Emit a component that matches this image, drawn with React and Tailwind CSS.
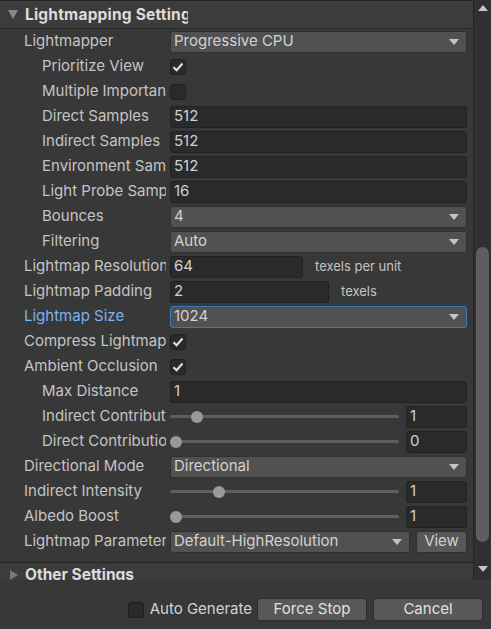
import React from 'react';

const Arrow = () => (
  <svg width="10" height="6" viewBox="0 0 10 6" className="shrink-0">
    <path d="M0 0 L10 0 L5 6 Z" fill="#c4c4c4" />
  </svg>
);

const Check = ({ on }) => (
  <div className="w-[16px] h-[16px] shrink-0 rounded-[3px] bg-[#2a2a2a] border border-[#1f1f1f] flex items-center justify-center">
    {on && (
      <svg width="12" height="10" viewBox="0 0 12 10">
        <path d="M1.5 5.2 L4.6 8.2 L10.5 1.5" stroke="#e4e4e4" strokeWidth="2" fill="none" />
      </svg>
    )}
  </div>
);

const Field = ({ value, className = 'flex-1' }) => (
  <div className={`${className} h-[22px] rounded-[3px] bg-[#2a2a2a] border border-[#212121] px-[3px] flex items-center text-[#d2d2d2]`}>
    {value}
  </div>
);

const Dropdown = ({ value, focus }) => (
  <div
    className={`flex-1 h-[22px] rounded-[3px] bg-[#515151] border ${focus ? 'border-[#3a79bb]' : 'border-[#303030]'} pl-[3px] pr-[7px] flex items-center justify-between text-[#d2d2d2]`}
  >
    <span>{value}</span>
    <Arrow />
  </div>
);

const Slider = ({ pos, value }) => (
  <div className="flex-1 flex items-center gap-[7px]">
    <div className="relative flex-1 h-[22px] flex items-center">
      <div className="w-full h-[3px] bg-[#5e5e5e] rounded-full" />
      <div
        className="absolute top-[5px] w-[12px] h-[12px] rounded-full bg-[#999999]"
        style={{ left: pos }}
      />
    </div>
    <Field value={value} className="w-[61px]" />
  </div>
);

const Row = ({ label, indent, blue, children }) => (
  <div className="h-[25px] shrink-0 flex items-center pr-[6px]">
    <div
      className={`w-[170px] shrink-0 pr-[4px] overflow-hidden whitespace-nowrap ${indent ? 'pl-[42px]' : 'pl-[24px]'}`}
    >
      <div className={`overflow-hidden ${blue ? 'text-[#7bb2f0]' : 'text-[#c4c4c4]'}`}>{label}</div>
    </div>
    <div className="flex-1 flex items-center">{children}</div>
  </div>
);

export default function App() {
  return (
    <div
      className="w-[491px] h-[629px] bg-[#383838] flex flex-col overflow-hidden text-[15px]"
      style={{ fontFamily: 'Inter, "Noto Sans", sans-serif' }}
    >
      <div className="h-[580px] shrink-0 flex">
        <div className="w-[474px] flex flex-col overflow-hidden border-r border-[#232323]">
          <div className="h-[29px] shrink-0 bg-[#3c3c3c] border-t border-[#232323] border-b border-b-[#2a2a2a] flex items-center">
            <div className="w-[25px] flex justify-center pl-[1px]">
              <svg width="10" height="9" viewBox="0 0 10 9">
                <path d="M0 0 L10 0 L5 9 Z" fill="#8a8a8a" />
              </svg>
            </div>
            <div className="w-[163px] overflow-hidden whitespace-nowrap font-bold text-[15.5px] tracking-[0.2px] text-[#dcdcdc]">
              Lightmapping Settings
            </div>
          </div>

          <Row label="Lightmapper"><Dropdown value="Progressive CPU" /></Row>
          <Row label="Prioritize View" indent><Check on /></Row>
          <Row label="Multiple Importance Sampling" indent><Check /></Row>
          <Row label="Direct Samples" indent><Field value="512" /></Row>
          <Row label="Indirect Samples" indent><Field value="512" /></Row>
          <Row label="Environment Samples" indent><Field value="512" /></Row>
          <Row label="Light Probe Sample Multiplier" indent><Field value="16" /></Row>
          <Row label="Bounces" indent><Dropdown value="4" /></Row>
          <Row label="Filtering" indent><Dropdown value="Auto" /></Row>
          <Row label="Lightmap Resolution">
            <Field value="64" className="w-[133px]" />
            <span className="ml-[12px] text-[13px] text-[#c4c4c4]">texels per unit</span>
          </Row>
          <Row label="Lightmap Padding">
            <Field value="2" className="w-[159px]" />
            <span className="ml-[12px] text-[13px] text-[#c4c4c4]">texels</span>
          </Row>
          <Row label="Lightmap Size" blue><Dropdown value="1024" focus /></Row>
          <Row label="Compress Lightmaps"><Check on /></Row>
          <Row label="Ambient Occlusion"><Check on /></Row>
          <Row label="Max Distance" indent><Field value="1" /></Row>
          <Row label="Indirect Contribution" indent><Slider pos={21} value="1" /></Row>
          <Row label="Direct Contribution" indent><Slider pos={0} value="0" /></Row>
          <Row label="Directional Mode"><Dropdown value="Directional" /></Row>
          <Row label="Indirect Intensity"><Slider pos={43} value="1" /></Row>
          <Row label="Albedo Boost"><Slider pos={0} value="1" /></Row>
          <Row label="Lightmap Parameters">
            <div className="flex-1 flex items-center gap-[6px]">
              <Dropdown value="Default-HighResolution" />
              <div className="w-[51px] h-[22px] rounded-[3px] bg-[#585858] border border-[#303030] flex items-center justify-center text-[#d2d2d2]">
                View
              </div>
            </div>
          </Row>

          <div className="mt-[8px] h-[25px] shrink-0 bg-[#3c3c3c] border-t border-[#232323] flex items-center">
            <div className="w-[25px] flex justify-center pl-[3px]">
              <svg width="8" height="10" viewBox="0 0 8 10">
                <path d="M0 0 L8 5 L0 10 Z" fill="#7a7a7a" />
              </svg>
            </div>
            <div className="font-bold text-[15.5px] text-[#dcdcdc] whitespace-nowrap">Other Settings</div>
          </div>
        </div>

        <div className="w-[17px] bg-[#303030] flex flex-col items-center">
          <svg width="10" height="6" viewBox="0 0 10 6" className="mt-[5px]">
            <path d="M0 6 L10 6 L5 0 Z" fill="#c4c4c4" />
          </svg>
          <div className="mt-[236px] w-[13px] h-[295px] rounded-full bg-[#5e5e5e]" />
          <svg width="10" height="6" viewBox="0 0 10 6" className="mt-[24px]">
            <path d="M0 0 L10 0 L5 6 Z" fill="#c4c4c4" />
          </svg>
        </div>
      </div>

      <div className="flex-1 bg-[#383838] flex items-center justify-end pr-[8px] pt-[10px]">
        <Check />
        <span className="ml-[6px] text-[#d2d2d2]">Auto Generate</span>
        <div className="ml-[5px] w-[110px] h-[23px] rounded-[3px] bg-[#585858] border border-[#303030] flex items-center justify-center text-[#e0e0e0]">
          Force Stop
        </div>
        <div className="ml-[6px] w-[110px] h-[23px] rounded-[3px] bg-[#585858] border border-[#303030] flex items-center justify-center text-[#e0e0e0]">
          Cancel
        </div>
      </div>
    </div>
  );
}
